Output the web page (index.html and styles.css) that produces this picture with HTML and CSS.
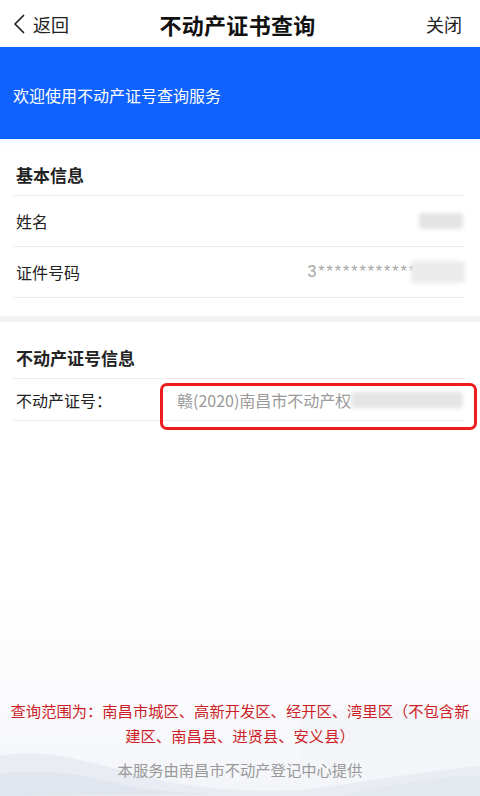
FILE: index.html
```html
<!DOCTYPE html>
<html lang="zh-CN">
<head>
<meta charset="utf-8">
<title>不动产证书查询</title>
<link rel="stylesheet" href="styles.css">
</head>
<body>
<div class="page">
  <header class="nav">
    <div class="nav-back">
      <svg class="chev" width="12" height="20" viewBox="0 0 12 20"><polyline points="10.5,1.5 2,10 10.5,18.5" fill="none" stroke="#222" stroke-width="1.7" stroke-linecap="round" stroke-linejoin="round"/></svg>
      <span>返回</span>
    </div>
    <div class="nav-title">不动产证书查询</div>
    <div class="nav-close">关闭</div>
  </header>

  <div class="banner">欢迎使用不动产证号查询服务</div>

  <section class="card card-first">
    <h2 class="card-head">基本信息</h2>
    <div class="row">
      <span class="label">姓名</span>
      <span class="value"><span class="blur blur-name"></span></span>
    </div>
    <div class="row">
      <span class="label">证件号码</span>
      <span class="value"><span class="id-text">3************</span><span class="blur blur-id"></span></span>
    </div>
  </section>

  <div class="band"></div>

  <section class="card card-second">
    <h2 class="card-head">不动产证号信息</h2>
    <div class="row row-short">
      <span class="label">不动产证号：</span>
      <span class="cert"><span class="cert-text">赣(2020)南昌市不动产权</span><span class="blur blur-cert"></span></span>
    </div>
    <div class="highlight"></div>
  </section>

  <footer class="foot">
    <svg class="hills" width="480" height="200" viewBox="0 0 480 200" preserveAspectRatio="none">
      <defs>
        <linearGradient id="fade" x1="0" y1="0" x2="0" y2="1">
          <stop offset="0" stop-color="#f6f7fa" stop-opacity="0"/>
          <stop offset="0.6" stop-color="#f6f7fa" stop-opacity="0.7"/>
          <stop offset="1" stop-color="#f2f4f8" stop-opacity="1"/>
        </linearGradient>
      </defs>
      <rect x="0" y="0" width="480" height="200" fill="url(#fade)"/>
      <path d="M300,120 C340,112 380,108 420,114 C450,118 470,122 480,124 L480,200 L300,200 Z" fill="#f3f5f8"/>
      <path d="M0,160 C20,156 40,156 70,162 C110,170 140,180 180,188 C220,194 260,196 300,194 C340,190 370,184 400,180 C430,176 460,172 480,170 L480,200 L0,200 Z" fill="#e9edf3"/>
      <path d="M0,178 C40,172 80,178 120,188 C160,196 200,198 240,198 L0,200 Z" fill="#e1e6ee"/>
      <path d="M340,200 C380,190 420,184 460,180 C470,179 476,179 480,180 L480,200 Z" fill="#e4e8ef"/>
    </svg>
    <p class="scope">查询范围为：南昌市城区、高新开发区、经开区、湾里区（不包含新建区、南昌县、进贤县、安义县）</p>
    <p class="provider">本服务由南昌市不动产登记中心提供</p>
  </footer>
</div>
</body>
</html>
```

FILE: styles.css
```css
* { box-sizing: border-box; }

html, body {
  margin: 0;
  padding: 0;
  background: #ffffff;
}

body {
  font-family: "Noto Sans CJK SC", "Noto Sans", sans-serif;
  color: #222;
}

.page {
  width: 480px;
  min-height: 796px;
  display: flex;
  flex-direction: column;
  overflow: hidden;
}

.nav {
  height: 47px;
  display: flex;
  align-items: center;
  justify-content: space-between;
  padding: 0 18px 0 13px;
  position: relative;
  background: #fff;
}

.nav-back {
  display: flex;
  align-items: center;
  gap: 8px;
  font-size: 18px;
  color: #222;
  width: 90px;
}

.chev { display: block; }

.nav-title {
  font-size: 22px;
  font-weight: 700;
  color: #111;
  letter-spacing: 0.3px;
}

.nav-close {
  font-size: 18px;
  color: #222;
  width: 90px;
  text-align: right;
}

.banner {
  height: 92px;
  background: #1062fe;
  color: #fff;
  font-size: 16px;
  display: flex;
  align-items: center;
  padding-left: 13px;
  padding-top: 4px;
  box-shadow: 0 3px 5px rgba(16, 98, 254, 0.08);
}

.card {
  padding: 0 15px 0 13px;
  position: relative;
}

.card-first { padding-bottom: 18px; }

.card-head {
  margin: 0;
  padding: 25px 0 9px 3px;
  font-size: 17px;
  line-height: 22px;
  font-weight: 700;
  color: #222;
  border-bottom: 1px solid #ececec;
}

.row {
  height: 51px;
  display: flex;
  align-items: center;
  justify-content: space-between;
  padding-left: 3px;
  border-bottom: 1px solid #ececec;
  font-size: 16px;
}

.row-short { height: 42px; justify-content: flex-start; }

.label { color: #222; }

.value {
  display: flex;
  align-items: center;
}

.id-text {
  color: #a5a5a5;
  font-family: "Liberation Sans", sans-serif;
  font-size: 16px;
  letter-spacing: 2px;
}

.blur {
  display: inline-block;
  background: #dcdcdc;
  filter: blur(2px);
  border-radius: 3px;
}

.blur-name { width: 44px; height: 16px; margin-right: 2px; background: #e3e3e3; }
.blur-id { width: 54px; height: 22px; background: #ebebeb; margin-left: -6px; }

.cert {
  margin-left: 65px;
  display: flex;
  align-items: center;
  font-size: 16px;
  color: #9a9a9a;
}

.blur-cert { width: 112px; height: 16px; background: #e4e4e4; margin-left: 0; }

.highlight {
  position: absolute;
  left: 160px;
  top: 61px;
  width: 317px;
  height: 47px;
  border: 3px solid #ee1d1d;
  border-radius: 7px;
}

.band {
  height: 6px;
  background: #f3f3f3;
}

.foot {
  margin-top: auto;
  position: relative;
  padding: 0 8px 14px;
  text-align: center;
}

.hills {
  position: absolute;
  left: 0;
  bottom: 0;
  z-index: 0;
}

.scope, .provider {
  position: relative;
  z-index: 1;
  margin: 0;
  font-size: 15.3px;
  line-height: 25px;
}

.scope { color: #cc1f28; }

.provider {
  color: #999;
  margin-top: 9px;
}
```
